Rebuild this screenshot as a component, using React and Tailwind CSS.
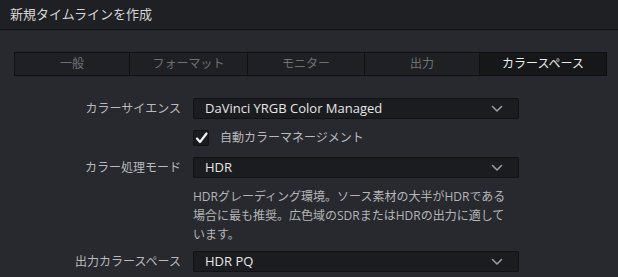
import React from "react";

const font = { fontFamily: '"Open Sans", "Noto Sans CJK JP", sans-serif' };

function Chevron() {
  return (
    <svg width="12" height="8" viewBox="0 0 12 8" className="shrink-0">
      <path d="M1.5 1.5 L6 6 L10.5 1.5" fill="none" stroke="#9a9b9f" strokeWidth="1.6" strokeLinecap="round" strokeLinejoin="round" />
    </svg>
  );
}

function Select({ value }) {
  return (
    <div className="w-[326px] h-[21px] bg-[#1b1c1f] border border-[#111214] rounded-[2px] flex items-center justify-between pl-[11px] pr-[15px] text-[13px] font-normal text-[#e6e6e6]">
      <span>{value}</span>
      <Chevron />
    </div>
  );
}

function Row({ label, children, className = "" }) {
  return (
    <div className={"flex items-center " + className}>
      <div className="w-[181px] text-right text-[12px] text-[#b9babd]">{label}</div>
      <div className="ml-[12px]">{children}</div>
    </div>
  );
}

export default function App() {
  const tabs = [
    ["一般", "w-[114px]"],
    ["フォーマット", "w-[118px]"],
    ["モニター", "w-[117px]"],
    ["出力", "w-[115px]"],
    ["カラースペース", "flex-1"],
  ];
  return (
    <div className="w-[618px] h-[277px] bg-[#28292e] overflow-hidden font-normal" style={font}>
      <div className="h-[30px] bg-[#1f2024] border-b border-[#111214] pl-[10px] flex items-center text-[13px] text-[#d6d6d8]">
        新規タイムラインを作成
      </div>
      <div className="pl-[14px] pr-[11px] pt-[22px]">
        <div className="flex h-[24px] border border-[#0e0f11] bg-[#1f2024]">
          {tabs.map(([t, w], i) => (
            <div
              key={t}
              className={
                w +
                " flex items-center justify-center text-[12px] " +
                (i > 0 ? "border-l border-[#0e0f11] " : "") +
                (i === 4 ? "bg-[#161719] text-[#ececec]" : "text-[#6f7074]")
              }
            >
              {t}
            </div>
          ))}
        </div>
      </div>
      <div className="mt-[22px]">
        <Row label="カラーサイエンス">
          <Select value="DaVinci YRGB Color Managed" />
        </Row>
        <div className="flex items-center mt-[10px] ml-[193px]">
          <div className="w-[16px] h-[16px] bg-[#1a1b1e] border border-[#111214] rounded-[2px] flex items-center justify-center">
            <svg width="13" height="12" viewBox="0 0 13 12">
              <path d="M2 6.5 L5 10 L11.5 1.5" fill="none" stroke="#f2f2f2" strokeWidth="2.2" strokeLinecap="round" strokeLinejoin="round" />
            </svg>
          </div>
          <span className="ml-[11px] text-[12px] text-[#b9babd]">自動カラーマネージメント</span>
        </div>
        <Row label="カラー処理モード" className="mt-[10px]">
          <Select value="HDR" />
        </Row>
        <div className="ml-[193px] mt-[9px] text-[12px] leading-[19px] text-[#b4b5b8] whitespace-nowrap">
          HDRグレーディング環境。ソース素材の大半がHDRである
          <br />
          場合に最も推奨。広色域のSDRまたはHDRの出力に適して
          <br />
          います。
        </div>
        <Row label="出力カラースペース" className="mt-[7px]">
          <Select value="HDR PQ" />
        </Row>
      </div>
    </div>
  );
}
